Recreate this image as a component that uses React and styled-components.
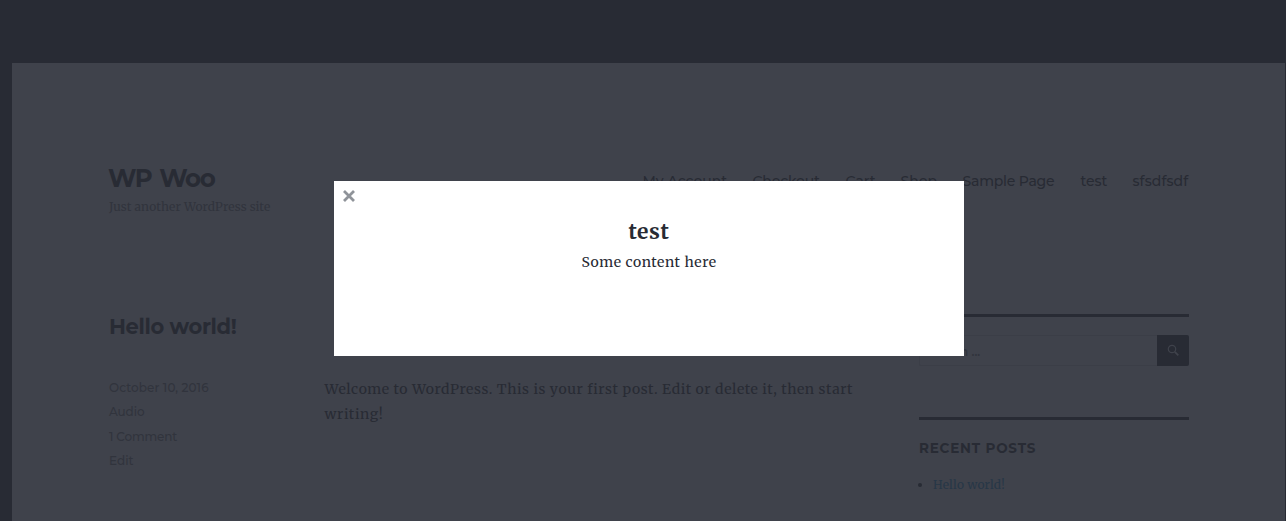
import React from 'react';
import styled, { createGlobalStyle } from 'styled-components';

const ink = '#282b34';
const faded = '#31343d';
const paper = '#3f424b';
const serif = '"Merriweather", "DejaVu Serif", serif';
const sans = '"Montserrat", "Inter", sans-serif';

const GlobalStyle = createGlobalStyle`
  * { box-sizing: border-box; }
  body { margin: 0; background: ${ink}; overflow: hidden; }
  h1, h2, h3, p, ul { margin: 0; padding: 0; }
`;

const Frame = styled.div`
  position: relative;
  width: 1286px;
  height: 521px;
  padding: 63px 1px 0 12px;
  overflow: hidden;
  background: ${ink};
`;

const Site = styled.div`
  height: 458px;
  padding: 98px 96px 0 97px;
  background: ${paper};
  color: ${ink};
`;

const Header = styled.header`
  display: flex;
  justify-content: space-between;
  height: 153px;
`;

const SiteTitle = styled.h1`
  margin-left: -1px;
  font: 700 24.5px/34px ${sans};
  letter-spacing: -1.4px;
  word-spacing: 2.5px;
  white-space: nowrap;
`;

const Tagline = styled.p`
  font: 12px/24px ${serif};
  letter-spacing: 0.13px;
  color: ${faded};
  white-space: nowrap;
`;

const Nav = styled.nav`
  display: flex;
  gap: 25px;
  height: 40px;
  font: 500 14px/40px ${sans};
`;

const NavItem = styled.a`
  width: ${({ $width }) => $width}px;
  letter-spacing: ${({ $track }) => $track}px;
  white-space: nowrap;
`;

const Columns = styled.div`
  display: flex;
  justify-content: space-between;
`;

const Article = styled.article`
  width: 760px;
`;

const PostTitle = styled.h2`
  height: 62px;
  font: 700 21px/26px ${sans};
  letter-spacing: -0.35px;
`;

const PostBody = styled.div`
  display: flex;
`;

const Meta = styled.div`
  display: flex;
  flex-direction: column;
  width: 215.5px;
  font: 500 12px/24.4px ${sans};
  color: ${faded};
`;

const MetaItem = styled.span`
  letter-spacing: ${({ $track }) => $track}px;
`;

const Copy = styled.p`
  padding-top: 1px;
  font: 14px/25px ${serif};
  letter-spacing: 0.57px;
  white-space: nowrap;
`;

const Sidebar = styled.aside`
  width: 270px;
`;

const Widget = styled.section`
  height: 103px;
  padding-top: ${({ $top }) => $top}px;
  border-top: 3px solid ${ink};
`;

const SearchForm = styled.form`
  display: flex;
  height: 31px;
`;

const SearchField = styled.div`
  flex: 1;
  padding-left: 6px;
  border: 1px solid #3b3e47;
  border-right: 0;
  border-radius: 2px 0 0 2px;
  font: 600 12px/31px ${sans};
  color: ${faded};
`;

const SearchButton = styled.button`
  display: flex;
  width: 32px;
  padding: 9px 0 0 10px;
  border: 0;
  border-radius: 0 2px 2px 0;
  background: ${ink};
  color: ${paper};
`;

const WidgetTitle = styled.h3`
  font: 700 13.5px/24px ${sans};
  letter-spacing: 0.8px;
`;

const PostList = styled.ul`
  padding: 13px 0 0 14px;
  list-style: none;
`;

const PostItem = styled.li`
  display: flex;
  align-items: center;
  margin-left: -15px;
  font: 12px/24px ${serif};
  letter-spacing: 0.2px;
  color: #273747;

  &::before {
    content: '';
    width: 4px;
    height: 4px;
    margin-right: 11px;
    border-radius: 50%;
    background: ${ink};
  }
`;

const Dialog = styled.div`
  position: absolute;
  top: 181px;
  left: 334px;
  width: 630px;
  height: 175px;
  padding-top: 35px;
  background: #fff;
  color: ${ink};
  text-align: center;
`;

const CloseButton = styled.button`
  position: absolute;
  top: 9px;
  left: 9px;
  display: flex;
  padding: 0;
  border: 0;
  background: none;
  color: #8f9399;
`;

const DialogTitle = styled.h2`
  font: 700 21px/32px ${serif};
  letter-spacing: 0.6px;
`;

const DialogText = styled.p`
  font: 14px/28px ${serif};
  letter-spacing: 0.57px;
`;

const links = [
  ['My Account', 85, 0],
  ['Checkout', 68, -0.15],
  ['Cart', 30, 0],
  ['Shop', 37, -0.05],
  ['Sample Page', 93, -0.2],
  ['test', 27, 0],
  ['sfsdfsdf', 56.5, 0.1],
];

const meta = [
  ['October 10, 2016', 0.1],
  ['Audio', -0.1],
  ['1 Comment', -0.15],
  ['Edit', 0],
];

export default function App() {
  return (
    <>
      <GlobalStyle />
      <Frame>
        <Site>
          <Header>
            <div>
              <SiteTitle>WP Woo</SiteTitle>
              <Tagline>Just another WordPress site</Tagline>
            </div>
            <Nav>
              {links.map(([label, width, track]) => (
                <NavItem key={label} $width={width} $track={track}>{label}</NavItem>
              ))}
            </Nav>
          </Header>
          <Columns>
            <Article>
              <PostTitle>Hello world!</PostTitle>
              <PostBody>
                <Meta>
                  {meta.map(([label, track]) => (
                    <MetaItem key={label} $track={track}>{label}</MetaItem>
                  ))}
                </Meta>
                <Copy>
                  Welcome to WordPress. This is your first post. Edit or delete it, then start
                  <br />
                  writing!
                </Copy>
              </PostBody>
            </Article>
            <Sidebar>
              <Widget $top={18}>
                <SearchForm>
                  <SearchField>Search ...</SearchField>
                  <SearchButton type="button" aria-label="Search">
                    <svg width="13" height="13" viewBox="0 0 13 13" fill="none" stroke="currentColor">
                      <circle cx="5" cy="5" r="3.7" strokeWidth="1.2" />
                      <path d="M7.8 7.8l3.5 3.5" strokeWidth="1.8" />
                    </svg>
                  </SearchButton>
                </SearchForm>
              </Widget>
              <Widget $top={16}>
                <WidgetTitle>RECENT POSTS</WidgetTitle>
                <PostList>
                  <PostItem>Hello world!</PostItem>
                </PostList>
              </Widget>
            </Sidebar>
          </Columns>
        </Site>
        <Dialog role="dialog">
          <CloseButton type="button" aria-label="Close">
            <svg width="12" height="12" viewBox="0 0 12 12" stroke="currentColor" strokeWidth="2.8">
              <path d="M1 1l10 10M11 1L1 11" />
            </svg>
          </CloseButton>
          <DialogTitle>test</DialogTitle>
          <DialogText>Some content here</DialogText>
        </Dialog>
      </Frame>
    </>
  );
}
